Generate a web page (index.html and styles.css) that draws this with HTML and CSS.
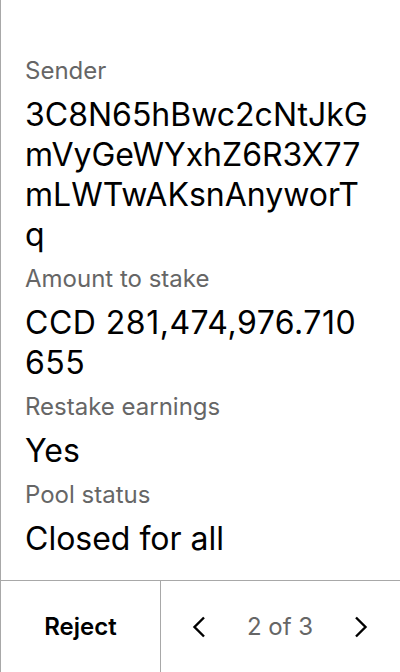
FILE: index.html
```html
<!DOCTYPE html>
<html lang="en">
<head>
<meta charset="utf-8">
<title>Transaction</title>
<link rel="stylesheet" href="styles.css">
</head>
<body>
<div class="screen">
  <main class="content">
    <div class="field">
      <div class="label">Sender</div>
      <div class="value">3C8N65hBwc2cNtJkGmVyGeWYxhZ6R3X77mLWTwAKsnAnyworTq</div>
    </div>
    <div class="field">
      <div class="label">Amount to stake</div>
      <div class="value value--amount">CCD 281,474,976.710655</div>
    </div>
    <div class="field">
      <div class="label">Restake earnings</div>
      <div class="value">Yes</div>
    </div>
    <div class="field">
      <div class="label">Pool status</div>
      <div class="value">Closed for all</div>
    </div>
  </main>
  <footer class="footer">
    <div class="reject">Reject</div>
    <div class="pager">
      <svg class="chev" viewBox="0 0 16 22" width="16" height="22"><path d="M13 1.5 L3.5 11 L13 20.5" fill="none" stroke="#000" stroke-width="2.4"/></svg>
      <span class="count">2 of 3</span>
      <svg class="chev" viewBox="0 0 16 22" width="16" height="22"><path d="M3 1.5 L12.5 11 L3 20.5" fill="none" stroke="#000" stroke-width="2.4"/></svg>
    </div>
  </footer>
</div>
</body>
</html>
```
FILE: styles.css
```css
* { box-sizing: border-box; }
html, body { margin: 0; padding: 0; background: #fff; }
body { font-family: Inter, "Noto Sans", sans-serif; color: #000; }
.screen {
  width: 400px;
  height: 672px;
  border-left: 1px solid #a8a8a8;
  display: flex;
  flex-direction: column;
}
.content {
  flex: 1;
  padding: 55px 27px 0 24px;
  display: flex;
  flex-direction: column;
  gap: 8px;
}
.field { display: flex; flex-direction: column; gap: 8px; }
.label {
  font-size: 24px;
  line-height: 32px;
  color: #666;
}
.value {
  font-size: 32px;
  line-height: 40px;
  color: #000;
  word-break: break-all;
}
.value--amount { letter-spacing: 0.5px; }
.footer {
  height: 92px;
  border-top: 1px solid #a8a8a8;
  display: grid;
  grid-template-columns: 159px 1fr;
}
.reject {
  display: flex;
  align-items: center;
  justify-content: center;
  font-size: 24px;
  font-weight: 600;
}
.pager {
  border-left: 1px solid #a8a8a8;
  display: flex;
  align-items: center;
  justify-content: space-between;
  padding: 0 31px 0 30px;
}
.count {
  font-size: 24px;
  color: #666;
}
.chev { display: block; }
```
